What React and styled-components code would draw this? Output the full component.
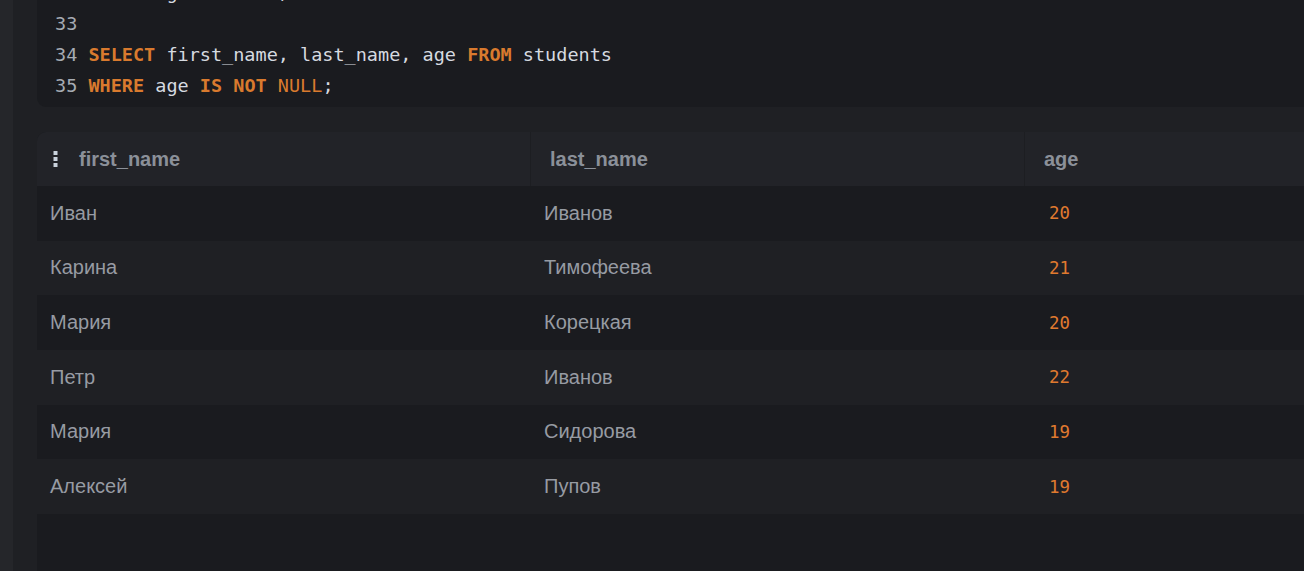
import React from 'react';
import styled, { createGlobalStyle } from 'styled-components';

const GlobalStyle = createGlobalStyle`
  html, body {
    margin: 0;
    padding: 0;
    background: #1f2024;
  }
`

const Page = styled.div`
  width: 1304px;
  height: 571px;
  display: flex;
  overflow: hidden;
  background: #1f2024;
`

const SideStrip = styled.div`
  width: 13px;
  flex-shrink: 0;
  background: #25262a;
`

const Main = styled.div`
  flex: 1;
  min-width: 0;
  padding-left: 24px;
  display: flex;
  flex-direction: column;
  gap: 25px;
`

const CodeBlock = styled.div`
  width: 1400px;
  margin-top: -30px;
  padding: 7px 18px 6px;
  background: #1a1b1f;
  border-radius: 0 0 0 9px;
  font-family: "DejaVu Sans Mono", "Liberation Mono", monospace;
  font-size: 18.5px;
  color: #d6dae0;
`

const CodeLine = styled.div`
  height: 31px;
  line-height: 31px;
  white-space: pre;
`

const LineNo = styled.span`
  color: #a6abb3;
`

const Kw = styled.span`
  color: #d97a2e;
  font-weight: ${p => (p.$light ? 400 : 700)};
`

const Table = styled.div`
  flex: 1;
  width: 1482px;
  background: #1a1b1f;
  border-radius: 9px 0 0 0;
  overflow: hidden;
  font-family: "Liberation Sans", Arial, sans-serif;
`

const HeadRow = styled.div`
  display: grid;
  grid-template-columns: 493px 494px 495px;
  height: 54px;
  background: #222328;
`

const HeadCell = styled.div`
  display: flex;
  align-items: center;
  gap: 21px;
  padding-left: ${p => p.$pad}px;
  font-size: 20px;
  font-weight: 700;
  color: #8b9099;
  border-left: ${p => (p.$first ? 'none' : '1px solid #1d1e22')};
`

const Row = styled.div`
  display: grid;
  grid-template-columns: 493px 494px 495px;
  height: 54.67px;
  background: ${p => (p.$alt ? '#1f2024' : '#1a1b1f')};
`

const Cell = styled.div`
  display: flex;
  align-items: center;
  padding-left: ${p => p.$pad}px;
  font-size: 20px;
  color: #979ba3;
`

const AgeCell = styled(Cell)`
  font-family: "DejaVu Sans Mono", "Liberation Mono", monospace;
  font-size: 17.4px;
  color: #e07a2f;
`

function DragHandle() {
  return (
    <svg width="5" height="16" viewBox="0 0 5 16">
      <rect x="0.5" y="0" width="4" height="4" fill="#c9d2dc" />
      <rect x="0.5" y="6" width="4" height="4" fill="#c9d2dc" />
      <rect x="0.5" y="12" width="4" height="4" fill="#c9d2dc" />
    </svg>
  );
}

const students = [
  ['Иван', 'Иванов', 20],
  ['Карина', 'Тимофеева', 21],
  ['Мария', 'Корецкая', 20],
  ['Петр', 'Иванов', 22],
  ['Мария', 'Сидорова', 19],
  ['Алексей', 'Пупов', 19],
];

function App() {
  return (
    <Page>
      <GlobalStyle />
      <SideStrip />
      <Main>
        <CodeBlock>
          <CodeLine><LineNo>32 </LineNo><Kw>WHERE</Kw> age <Kw>IS</Kw> <Kw $light>NULL</Kw>;</CodeLine>
          <CodeLine><LineNo>33</LineNo></CodeLine>
          <CodeLine><LineNo>34 </LineNo><Kw>SELECT</Kw> first_name, last_name, age <Kw>FROM</Kw> students</CodeLine>
          <CodeLine><LineNo>35 </LineNo><Kw>WHERE</Kw> age <Kw>IS</Kw> <Kw>NOT</Kw> <Kw $light>NULL</Kw>;</CodeLine>
        </CodeBlock>
        <Table>
          <HeadRow>
            <HeadCell $pad={16} $first><DragHandle />first_name</HeadCell>
            <HeadCell $pad={19}>last_name</HeadCell>
            <HeadCell $pad={19}>age</HeadCell>
          </HeadRow>
          {students.map((s, i) => (
            <Row key={i} $alt={i % 2 === 1}>
              <Cell $pad={13}>{s[0]}</Cell>
              <Cell $pad={14}>{s[1]}</Cell>
              <AgeCell $pad={25}>{s[2]}</AgeCell>
            </Row>
          ))}
        </Table>
      </Main>
    </Page>
  );
}

export default App;
